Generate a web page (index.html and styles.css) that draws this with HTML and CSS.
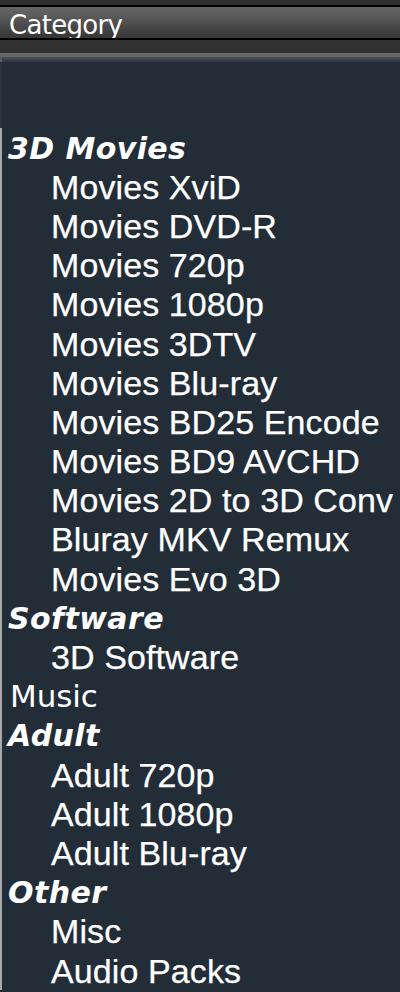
FILE: index.html
```html
<!DOCTYPE html>
<html lang="en">
<head>
<meta charset="utf-8">
<title>Category</title>
<link rel="stylesheet" href="styles.css">
</head>
<body>
<div class="page">
  <div class="topbar"></div>
  <div class="header">Category</div>
  <div class="spacer"></div>
  <div class="listbox">
    <div class="bevel"></div>
    <div class="blank"></div>
    <div class="list">
      <div class="row group">3D Movies</div>
      <div class="row opt">Movies XviD</div>
      <div class="row opt">Movies DVD-R</div>
      <div class="row opt">Movies 720p</div>
      <div class="row opt">Movies 1080p</div>
      <div class="row opt">Movies 3DTV</div>
      <div class="row opt">Movies Blu-ray</div>
      <div class="row opt">Movies BD25 Encode</div>
      <div class="row opt">Movies BD9 AVCHD</div>
      <div class="row opt">Movies 2D to 3D Conv</div>
      <div class="row opt">Bluray MKV Remux</div>
      <div class="row opt">Movies Evo 3D</div>
      <div class="row group">Software</div>
      <div class="row opt">3D Software</div>
      <div class="row plain">Music</div>
      <div class="row group">Adult</div>
      <div class="row opt">Adult 720p</div>
      <div class="row opt">Adult 1080p</div>
      <div class="row opt">Adult Blu-ray</div>
      <div class="row group">Other</div>
      <div class="row opt">Misc</div>
      <div class="row opt">Audio Packs</div>
    </div>
  </div>
</div>
</body>
</html>
```
FILE: styles.css
```css
html, body {
  margin: 0;
  padding: 0;
  overflow: hidden;
  background: #232d38;
}

.page {
  width: 400px;
  display: flex;
  flex-direction: column;
  color: #ffffff;
}

.topbar {
  height: 5px;
  background: #2f2f2f;
}

.header {
  box-sizing: content-box;
  border-top: 2px solid #000;
  border-bottom: 2px solid #000;
  background: linear-gradient(to bottom, #666666 0%, #5a5a5a 30%, #454545 70%, #363636 100%);
  font-family: "DejaVu Sans", Verdana, sans-serif;
  font-size: 26px;
  letter-spacing: -0.7px;
  line-height: 30px;
  padding: 3px 0 0 9px;
  height: 28px;
  overflow: hidden;
  white-space: nowrap;
}

.spacer {
  height: 13px;
  background: #323232;
}

.listbox {
  border-top: 4px solid #676767;
  background: #232d38;
  display: flex;
  flex-direction: column;
}

.bevel {
  height: 5px;
  background: linear-gradient(to bottom, #4a4f57, #2c3540);
  border-left: 2px solid #5c5c5c;
}

.blank {
  height: 65.6px;
  border-left: 2px solid #2b333d;
}

.list {
  border-left: 2px solid #a9a9a9;
  display: flex;
  flex-direction: column;
}

.row {
  height: 39.2px;
  white-space: nowrap;
}

.opt {
  font-family: "Liberation Sans", Arial, sans-serif;
  font-size: 34px;
  line-height: 40.2px;
  padding-left: 49px;
  letter-spacing: 0.1px;
  -webkit-text-stroke: 0.25px #ffffff;
}

.group {
  font-family: "DejaVu Sans", Verdana, sans-serif;
  font-size: 30px;
  font-weight: bold;
  font-style: italic;
  line-height: 41.8px;
  padding-left: 6px;
  letter-spacing: 0.4px;
}

.plain {
  font-family: "DejaVu Sans", Verdana, sans-serif;
  font-size: 31px;
  line-height: 41.4px;
  padding-left: 8px;
  letter-spacing: -0.1px;
}
```
